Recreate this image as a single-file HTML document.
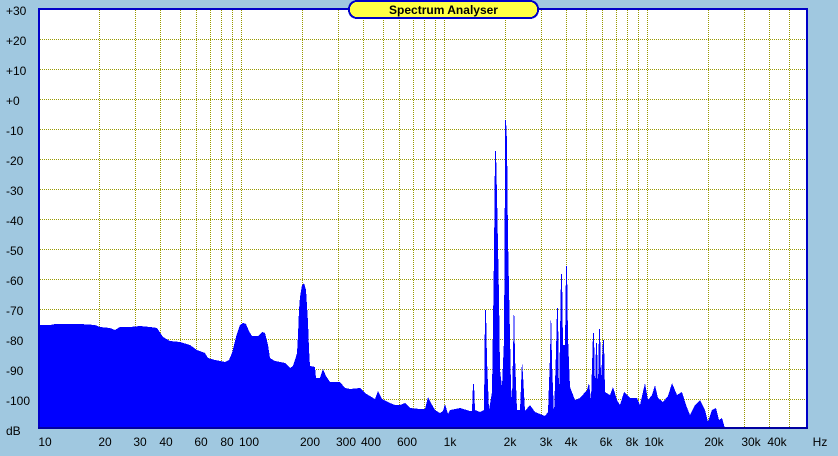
<!DOCTYPE html>
<html><head><meta charset="utf-8"><style>
html,body{margin:0;padding:0;background:#a0c8e0;width:838px;height:456px;overflow:hidden}
svg{display:block}
text{font-family:"Liberation Sans",sans-serif;font-size:12px;fill:#000}
</style></head><body>
<svg width="838" height="456" viewBox="0 0 838 456" xmlns="http://www.w3.org/2000/svg" shape-rendering="crispEdges">
<defs>
<pattern id="pv" patternUnits="userSpaceOnUse" x="0" y="0" width="1" height="2"><rect width="1" height="1" fill="#999900"/></pattern>
<pattern id="ph" patternUnits="userSpaceOnUse" x="0" y="0" width="2" height="1"><rect width="1" height="1" fill="#999900"/></pattern>
</defs>
<rect x="0" y="0" width="838" height="456" fill="#a0c8e0"/>
<rect x="38" y="8" width="770" height="421" fill="#fff"/>
<g fill="url(#ph)">
<rect x="40" y="39" width="766" height="1"/><rect x="40" y="69" width="766" height="1"/><rect x="40" y="99" width="766" height="1"/><rect x="40" y="129" width="766" height="1"/><rect x="40" y="159" width="766" height="1"/><rect x="40" y="189" width="766" height="1"/><rect x="40" y="219" width="766" height="1"/><rect x="40" y="249" width="766" height="1"/><rect x="40" y="279" width="766" height="1"/><rect x="40" y="309" width="766" height="1"/><rect x="40" y="339" width="766" height="1"/><rect x="40" y="369" width="766" height="1"/><rect x="40" y="399" width="766" height="1"/>
</g>
<g fill="url(#pv)">
<rect x="99" y="10" width="1" height="418"/><rect x="135" y="10" width="1" height="418"/><rect x="160" y="10" width="1" height="418"/><rect x="180" y="10" width="1" height="418"/><rect x="196" y="10" width="1" height="418"/><rect x="210" y="10" width="1" height="418"/><rect x="221" y="10" width="1" height="418"/><rect x="232" y="10" width="1" height="418"/><rect x="241" y="10" width="1" height="418"/>
<rect x="302" y="10" width="1" height="418"/><rect x="338" y="10" width="1" height="418"/><rect x="363" y="10" width="1" height="418"/><rect x="383" y="10" width="1" height="418"/><rect x="399" y="10" width="1" height="418"/><rect x="413" y="10" width="1" height="418"/><rect x="424" y="10" width="1" height="418"/><rect x="435" y="10" width="1" height="418"/><rect x="444" y="10" width="1" height="418"/>
<rect x="505" y="10" width="1" height="418"/><rect x="541" y="10" width="1" height="418"/><rect x="566" y="10" width="1" height="418"/><rect x="586" y="10" width="1" height="418"/><rect x="602" y="10" width="1" height="418"/><rect x="616" y="10" width="1" height="418"/><rect x="627" y="10" width="1" height="418"/><rect x="638" y="10" width="1" height="418"/><rect x="647" y="10" width="1" height="418"/>
<rect x="708" y="10" width="1" height="418"/><rect x="744" y="10" width="1" height="418"/><rect x="769" y="10" width="1" height="418"/><rect x="789" y="10" width="1" height="418"/>
</g>
<polygon fill="#0000ff" points="39,428 39,325 50,325 55,324 80,324 95,325 100,327 110,328 115,330 120,327 130,327 140,326 150,327 157,328 163,337 170,341 180,342 190,345 197,350 205,353 208,358 215,360 225,362 229,360 232,353 236,337 240,325 243,323 246,324 249,331 252,336 258,336 262,332 265,333 268,345 270,358 275,361 285,363 290,368 293,366 295,360 297,353 298,335 299,310 300,297 302,285 304,283 306,290 308,322 309,349 310,366 315,367 316,378 320,378 323,369 326,376 330,382 340,382 345,388 350,389 360,388 365,393 375,399 378,391 382,399 390,403 395,405 400,405 405,403 410,408 420,409 425,409 428,397 431,403 435,410 440,413 443,411 445,404 448,414 450,410 460,408 470,411 472,411 473,384 474,384 475,410 480,412 484,410 485,310 486,310 487,360 489,410 492,392 494,254 495,151 496,151 497,195 499,297 500,370 502,387 504,340 505,166 505,120 506,120 507,141 508,239 510,336 511,387 512,400 513,355 514,302 515,357 517,410 520,410 521,386 522,361 523,375 525,411 530,405 535,412 540,414 545,416 548,412 550,356 551,309 552,363 554,415 556,352 557,308 558,308 559,400 561,274 562,274 563,345 565,345 566,266 567,266 568,338 570,387 575,400 580,398 587,390 589,383 591,400 593,333 594,333 595,390 596,343 597,343 598,390 599,329 600,329 601,380 603,340 604,340 605,392 610,395 613,387 617,400 620,405 624,392 630,398 637,398 640,405 645,383 648,400 652,395 655,385 658,398 663,402 668,396 672,383 677,395 682,392 686,405 690,415 695,405 700,400 705,410 708,422 712,410 716,408 719,420 722,418 724,425 725,428"/>
<rect x="38" y="8" width="2" height="421" fill="#0000c8"/>
<rect x="38" y="8" width="770" height="2" fill="#0000c8"/>
<rect x="806" y="8" width="2" height="421" fill="#0000c8"/>
<rect x="38" y="427" width="770" height="2" fill="#0000a0"/>
<rect x="349" y="1" width="189" height="17" rx="8" ry="8" fill="#ffff44" stroke="#0000c8" stroke-width="2"/>
<text x="443.5" y="14" text-anchor="middle" style="font-weight:bold;font-size:12px">Spectrum Analyser</text>
<g text-anchor="start">
<text x="6" y="15">+30</text><text x="6" y="45">+20</text><text x="6" y="75">+10</text><text x="6" y="105">+0</text>
<text x="6" y="135">-10</text><text x="6" y="165">-20</text><text x="6" y="195">-30</text><text x="6" y="225">-40</text>
<text x="6" y="255">-50</text><text x="6" y="285">-60</text><text x="6" y="315">-70</text><text x="6" y="345">-80</text>
<text x="6" y="375">-90</text><text x="6" y="405">-100</text><text x="6" y="435">dB</text>
</g>
<g text-anchor="middle">
<text x="45" y="446">10</text><text x="105" y="446">20</text><text x="140" y="446">30</text><text x="166" y="446">40</text>
<text x="201" y="446">60</text><text x="227" y="446">80</text><text x="249" y="446">100</text><text x="310" y="446">200</text>
<text x="346" y="446">300</text><text x="371" y="446">400</text><text x="407" y="446">600</text><text x="450" y="446">1k</text>
<text x="510" y="446">2k</text><text x="546" y="446">3k</text><text x="571" y="446">4k</text><text x="606" y="446">6k</text>
<text x="632" y="446">8k</text><text x="654" y="446">10k</text><text x="714" y="446">20k</text><text x="751" y="446">30k</text>
<text x="777" y="446">40k</text><text x="820" y="446">Hz</text>
</g>
</svg>
</body></html>
